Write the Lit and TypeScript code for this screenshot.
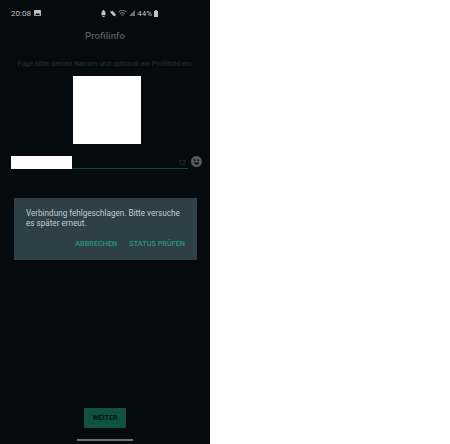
import { LitElement, html, css } from "lit";
import { customElement } from "lit/decorators.js";

@customElement("app-root")
export class AppRoot extends LitElement {
  static styles = css`
    :host { display: block; width: 450px; height: 444px; background: #fff; font-family: Roboto, "Liberation Sans", sans-serif; }
    .phone { width: 210px; height: 444px; background: #050a0c; display: flex; flex-direction: column; align-items: stretch; overflow: hidden; }
    .status { height: 26px; flex: none; display: flex; align-items: center; padding: 0 52px 0 11px; color: #c0c2c3; font-size: 8px; justify-content: space-between; box-sizing: border-box; }
    .status .left, .status .right { display: flex; align-items: center; gap: 3px; }
    .status .right { gap: 2px; }
    .status svg { display: block; }
    .gap { margin-left: 2px; }
    .title { text-align: center; color: #565c5e; font-size: 9.7px; font-weight: 500; line-height: 14px; margin-top: 3px; }
    .hint { text-align: center; color: #2b3033; font-size: 7.2px; line-height: 10px; margin: 16px 0 0 1px; white-space: nowrap; }
    .avatar { width: 68px; height: 68px; background: #fff; align-self: flex-start; margin: 7px 0 0 73px; }
    .inputrow { display: flex; align-items: flex-start; margin: 12px 0 0 11px; height: 13px; }
    .name { width: 61px; height: 13px; background: #fff; flex: none; }
    .line { width: 116px; height: 12px; border-bottom: 1px solid #0f4a3c; flex: none; box-sizing: content-box; display: flex; justify-content: flex-end; align-items: center; color: #33383a; font-size: 7px; }
    .line span { margin-right: 2px; margin-top: 1px; }
    .smile { margin-left: 3px; flex: none; }
    .dialog { margin: 29px 13px 0 14px; height: 62px; background: #2f3f48; padding: 10px 8px 0 12px; box-sizing: border-box; color: #c4c9cc; font-size: 8.15px; line-height: 10px; }
    .actions { display: flex; justify-content: flex-end; gap: 12px; color: #23967d; font-size: 7.3px; font-weight: 500; margin: 11px 4px 0 0; }
    .spacer { flex: 1; }
    .next { align-self: flex-start; margin: 0 0 11px 84px; width: 42px; height: 20px; background: #0f5240; color: #040a0a; font-size: 7px; font-weight: 500; display: flex; align-items: center; justify-content: center; }
    .home { align-self: flex-start; margin: 0 0 3px 77px; width: 56px; height: 2px; background: #6e7172; }
  `;

  render() {
    return html`<div class="phone">
      <div class="status">
        <div class="left">
          <span>20:08</span>
          <svg width="7" height="6" viewBox="0 0 8 7"><rect width="8" height="7" rx="0.8" fill="#c0c2c3"/><path d="M1 6l2-2.500 1.300 1.300L5.500 3.500 7 6z" fill="#050a0c"/></svg>
        </div>
        <div class="right">
          <svg width="5" height="7" viewBox="0 0 5 7"><path d="M2.500 0a1 1 0 0 1 1 1 2 2 0 0 1 1 1.700V5.300H.5V2.700a2 2 0 0 1 1-1.700 1 1 0 0 1 1-1zM1.500 5.900h2V7h-2z" fill="#c0c2c3"/></svg>
          <svg class="gap" width="6" height="7" viewBox="0 0 6 7"><path d="M0 0.500L6 6.500M0.800 2.500L2.500 1l3 3.500L4 6z" stroke="#c0c2c3" stroke-width="0.800" fill="#c0c2c3"/></svg>
          <svg width="9" height="7" viewBox="0 0 9 7"><path d="M0.500 2a6 6 0 0 1 8 0M2 3.600a4 4 0 0 1 5 0M3.300 5.200a2 2 0 0 1 2.400 0" stroke="#8f9293" stroke-width="0.900" fill="none"/></svg>
          <svg width="6" height="6" viewBox="0 0 6 6"><path d="M0 6L6 0v6z" fill="#6d7072"/></svg>
          <span>44%</span>
          <svg width="4" height="7" viewBox="0 0 4 7"><path d="M1.200 0h1.600v1H4v6H0V1h1.200z" fill="#c0c2c3"/></svg>
        </div>
      </div>
      <div class="title">Profilinfo</div>
      <div class="hint">Füge bitte deinen Namen und optional ein Profilbild ein.</div>
      <div class="avatar"></div>
      <div class="inputrow">
        <div class="name"></div>
        <div class="line"><span>12</span></div>
        <svg class="smile" width="11" height="11" viewBox="0 0 11 11"><circle cx="5.500" cy="5.500" r="5.500" fill="#55595b"/><circle cx="3.700" cy="4.200" r="0.900" fill="#050a0c"/><circle cx="7.300" cy="4.200" r="0.900" fill="#050a0c"/><path d="M2.800 6.500a2.800 2.800 0 0 0 5.400 0z" fill="#050a0c"/></svg>
      </div>
      <div class="dialog">
        <div>Verbindung fehlgeschlagen. Bitte versuche es später erneut.</div>
        <div class="actions"><span>ABBRECHEN</span><span>STATUS PRÜFEN</span></div>
      </div>
      <div class="spacer"></div>
      <div class="next">WEITER</div>
      <div class="home"></div>
    </div>`;
  }
}
